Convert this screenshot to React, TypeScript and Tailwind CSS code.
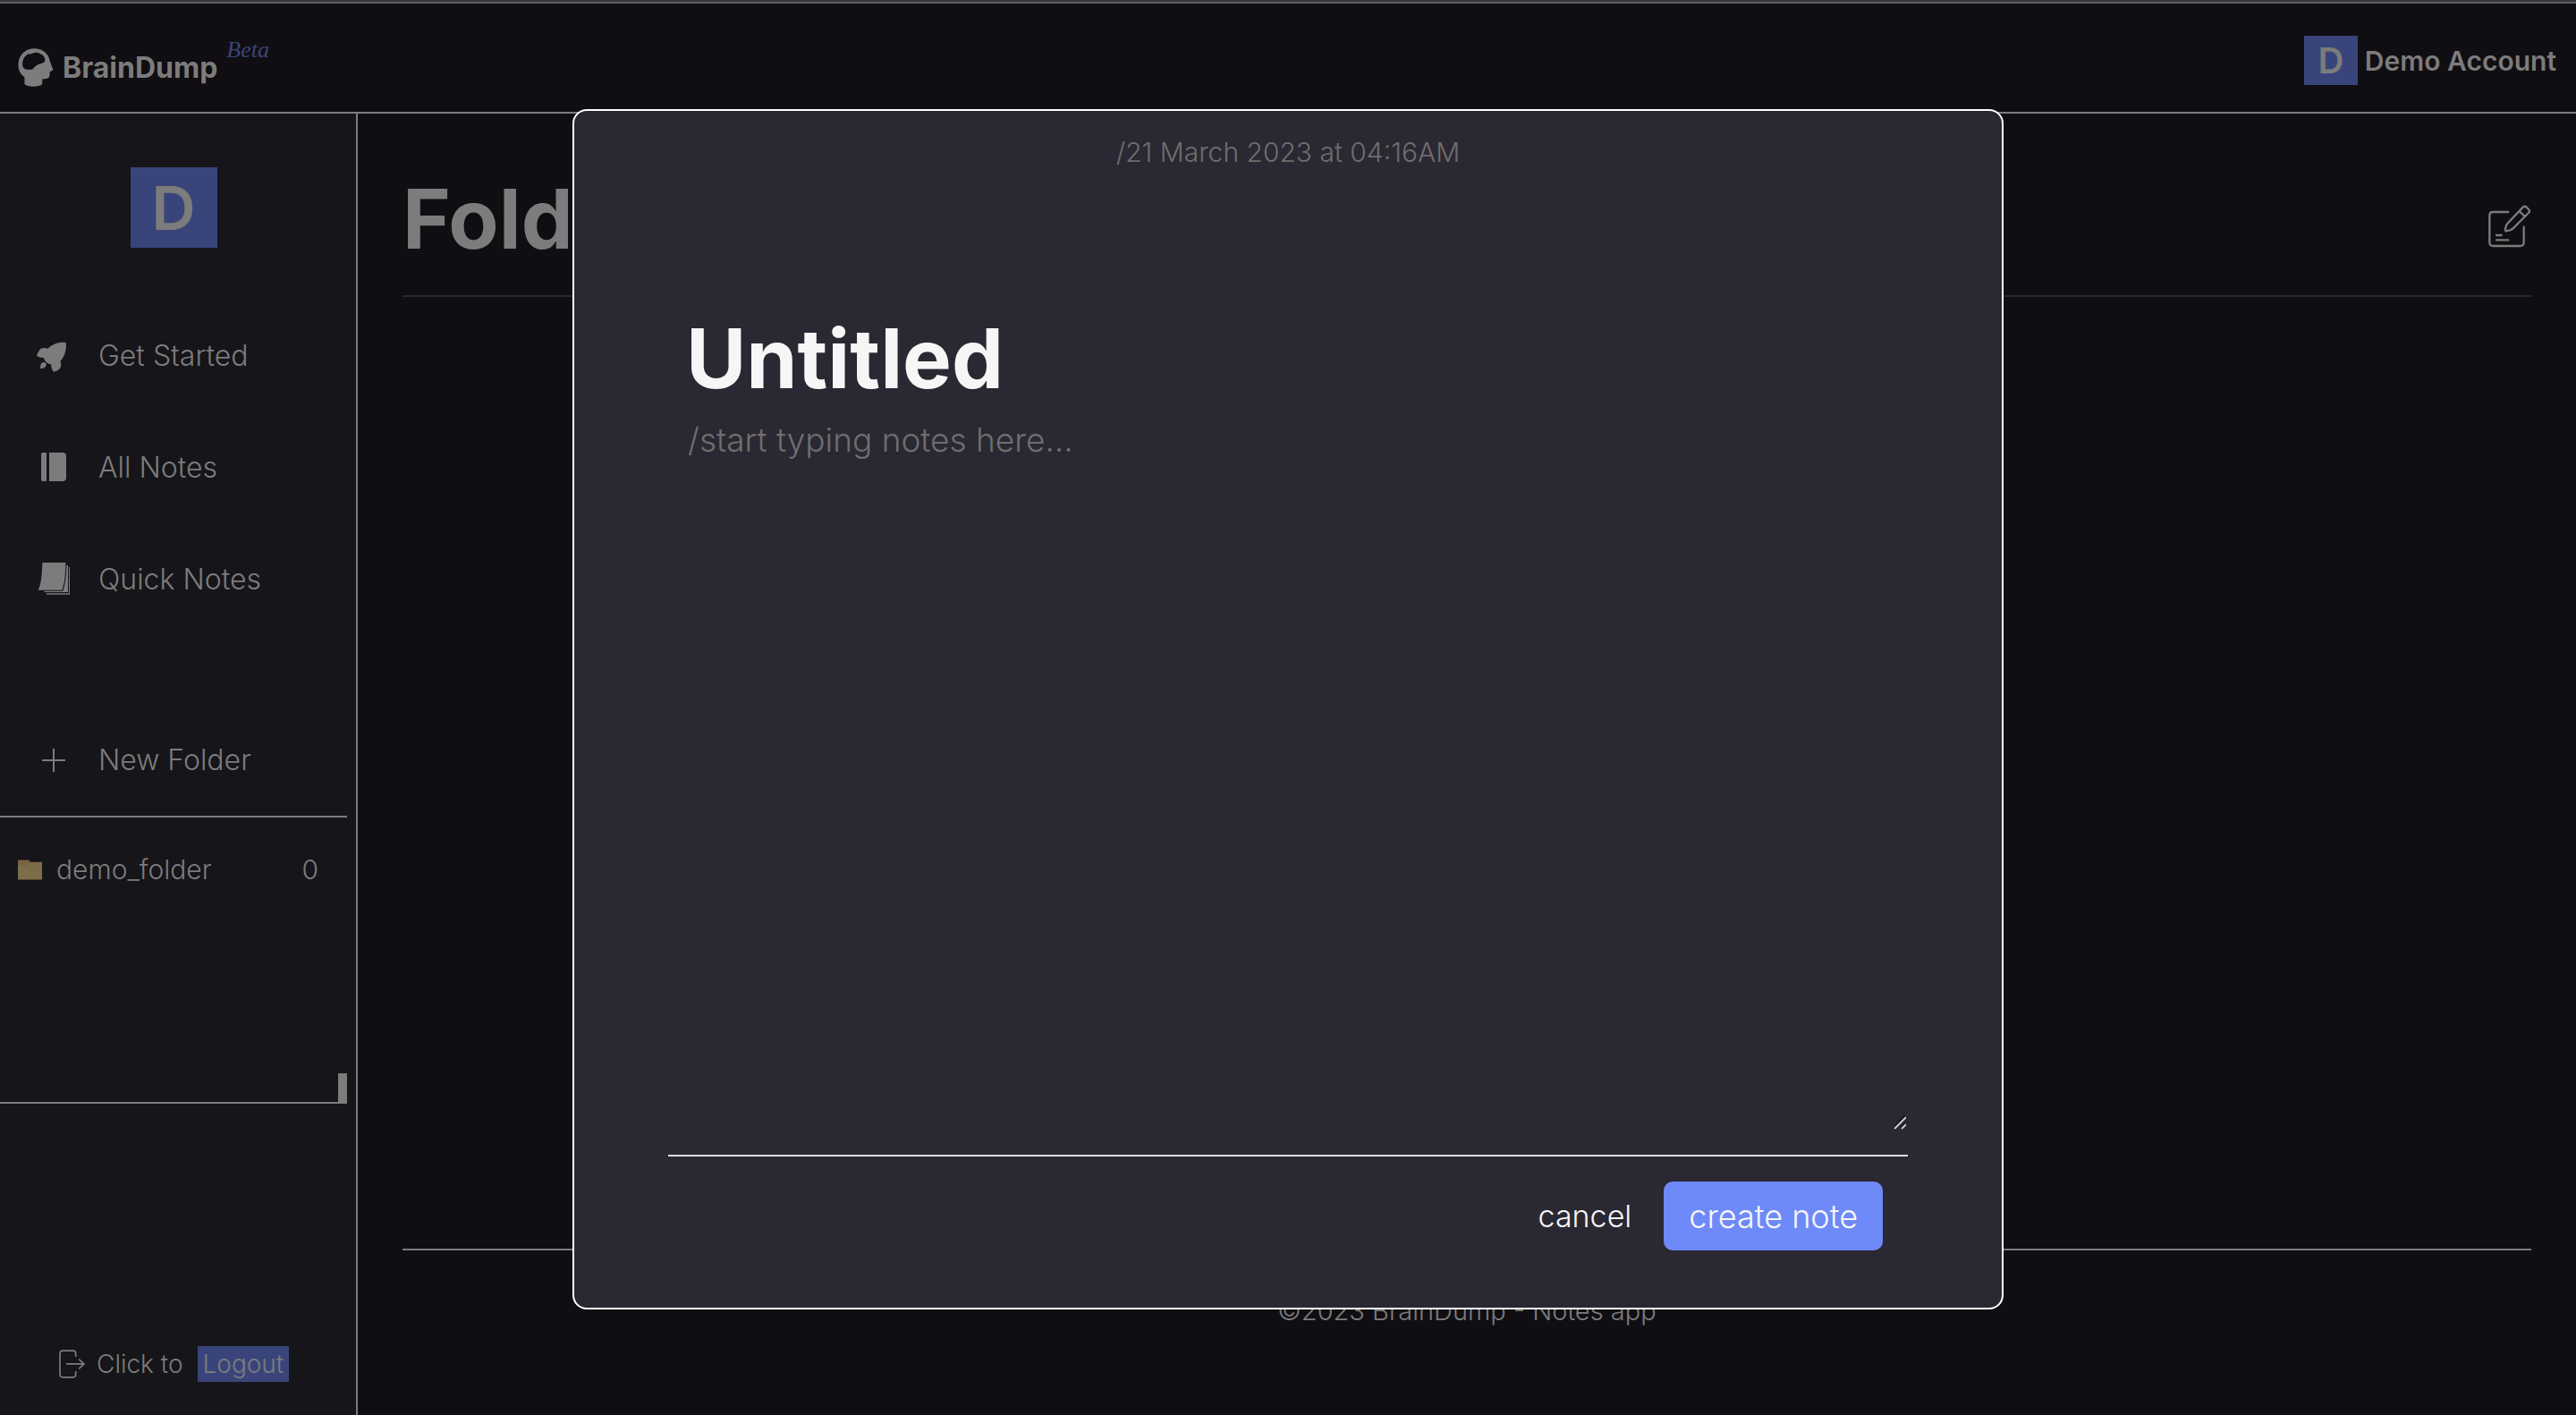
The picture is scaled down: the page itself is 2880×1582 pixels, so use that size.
import React from "react";

type IconProps = { className?: string };

function HeadIcon({ className }: IconProps) {
  return (
    <svg viewBox="62 162 120 130" className={className} fill="currentColor" fillRule="evenodd" aria-hidden="true">
      <path d="M63 217C63 184 88 163 117 163C145 163 166 180 170 206L180 233Q180 238 170 240L168 258Q165 266 144 266L144 283Q136 291 113 291Q92 291 84 283L84 259C70 250 63 236 63 217ZM77 217C77 200 84 187 98 181C106 184 109 178 116 178C122 174 136 177 138 182C147 184 154 193 153 204C151 211 143 212 134 215C123 219 117 226 112 232C105 236 98 233 91 234C82 231 77 226 77 217Z" />
    </svg>
  );
}

function RocketIcon({ className }: IconProps) {
  return (
    <svg viewBox="120 114 120 120" className={className} fill="currentColor" aria-hidden="true">
      <path d="M161 149C178 132 203 127 221 129C224 146 220 172 202 192C208 200 203 212 201 216C195 223 186 226 180 227C174 221 172 212 171 202C159 201 149 191 147 180C138 180 128 178 123 173C125 165 130 157 137 149C143 145 154 147 161 149Z" />
      <path d="M139 198Q147 191 154 199Q158 206 149 213Q142 217 135 215Q134 204 139 198Z" />
    </svg>
  );
}

function BookIcon({ className }: IconProps) {
  return (
    <svg viewBox="120 489 120 120" className={className} fill="currentColor" aria-hidden="true">
      <path d="M144 498H156V594H144Q138 594 138 588V504Q138 498 144 498Z" />
      <path d="M165 498H210Q222 498 222 510V582Q222 594 210 594H165Z" />
    </svg>
  );
}

function PagesIcon({ className }: IconProps) {
  return (
    <svg viewBox="120 864 120 120" className={className} fill="currentColor" aria-hidden="true">
      <path d="M142 867H220C220 905 216 940 208 959H128C138 940 141 905 142 867Z" />
      <path d="M223 876H228V966H148V962H211C218 945 222 915 223 876Z" />
      <path d="M231 882H234V974H156V970H231Z" />
    </svg>
  );
}

function PlusIcon({ className }: IconProps) {
  return (
    <svg viewBox="120 90 120 120" className={className} stroke="currentColor" strokeWidth="6" aria-hidden="true">
      <path d="M141 150H219M180 111V189" />
    </svg>
  );
}

function FolderIcon({ className }: IconProps) {
  return (
    <svg viewBox="0 0 81 68" className={className} aria-hidden="true">
      <path d="M0 1H36L42 8H81V20H0Z" fill="#7c6443" />
      <path d="M0 18H34L41 10H81V67H0Z" fill="#7c6d49" />
    </svg>
  );
}

function LogoutIcon({ className }: IconProps) {
  return (
    <svg viewBox="200 398 90 95" className={className} fill="none" stroke="currentColor" strokeWidth="5" strokeLinecap="round" strokeLinejoin="round" aria-hidden="true">
      <path d="M256 420V410Q256 401 247 401H212Q203 401 203 410V481Q203 490 212 490H247Q256 490 256 481V471M226 445H284M268 431L284 445L268 460" />
    </svg>
  );
}

function EditIcon({ className }: IconProps) {
  return (
    <svg viewBox="904 687 144 144" className={className} fill="none" stroke="currentColor" strokeWidth="7" strokeLinecap="round" strokeLinejoin="round" aria-hidden="true">
      <path d="M971 711H920Q908 711 908 723V813Q908 825 920 825H1011Q1023 825 1023 813V761M931 789H948M931 805H971" />
      <path d="M961 770Q962 756 968 750L1020 695Q1026 689 1032 695L1039 702Q1045 708 1039 714L987 766Q980 773 965 775Q961 775 961 770ZM1008 708L1026 726" />
    </svg>
  );
}

function GripIcon({ className }: IconProps) {
  return (
    <svg viewBox="0 0 14 16" className={className} fill="none" strokeWidth="2" aria-hidden="true">
      <path d="M0 14L13 0M8 14L13 9" stroke="#141318" />
      <path d="M1 15L14 2M9 15L14 10" stroke="#c9c8cd" />
    </svg>
  );
}

const links = [
  { label: "Get Started", Icon: RocketIcon },
  { label: "All Notes", Icon: BookIcon },
  { label: "Quick Notes", Icon: PagesIcon },
];

function Header() {
  return (
    <header className="flex h-[123px] items-center justify-between border-b-2 border-[#7c7c7c] pr-[22px] pl-5 font-semibold">
      <a href="#" className="mt-[22px] flex items-center gap-2.5">
        <HeadIcon className="h-[43px] w-10" />
        <span className="text-[32px] leading-10 font-bold">BrainDump</span>
        <sup className="-top-5 font-['Liberation_Serif',serif] text-[26px] leading-8 font-normal text-[#39457a] italic">Beta</sup>
      </a>
      <div className="mt-1.5 flex items-center gap-2">
        <span className="flex h-[55px] w-[60px] items-center justify-center bg-[#39457a] text-[40px]">D</span>
        <span className="text-[30px] leading-10">Demo Account</span>
      </div>
    </header>
  );
}

function Sidebar() {
  return (
    <aside className="flex w-[400px] shrink-0 flex-col border-r-2 border-[#7c7c7c] bg-[#161519] text-[32px] font-light">
      <div className="mt-[60px] mr-2.5 flex h-[90px] w-[97px] items-center justify-center self-center bg-[#39457a] text-[68px] font-semibold">D</div>
      <nav className="mt-[58px] flex flex-col">
        {links.map(({ label, Icon }) => (
          <a key={label} href="#" className="flex h-[125px] items-center gap-[30px] pl-10">
            <Icon className="size-10" />
            {label}
          </a>
        ))}
      </nav>
      <section className="mt-[77px] mr-2.5">
        <button className="flex h-[125px] w-full items-center gap-[30px] pl-10 text-left">
          <PlusIcon className="size-10" />
          New Folder
        </button>
        <div className="flex h-[322px] flex-col justify-between border-y-2 border-[#7c7c7c]">
          <a href="#" className="mt-9 flex items-center justify-between pr-8 pl-5 text-[30px] leading-11">
            <span className="flex items-center gap-4">
              <FolderIcon className="h-[23px] w-[27px]" />
              demo_folder
            </span>
            <span>0</span>
          </a>
          <span className="h-8 w-2.5 self-end bg-[#7c7c7c]" />
        </div>
      </section>
      <div className="mt-auto mb-9 flex items-center pl-[66px] text-[28px]">
        <LogoutIcon className="mr-3 h-8 w-[30px]" />
        Click to
        <button className="ml-4 h-10 bg-[#39457a] px-1.5 leading-10">Logout</button>
      </div>
    </aside>
  );
}

function NoteDialog() {
  return (
    <div className="fixed inset-0 flex items-start justify-center pt-[122px]">
      <form role="dialog" aria-label="New note" className="flex w-5/9 flex-col rounded-2xl border-2 border-white bg-[#2a2832] px-[105px] pb-16 text-[#f6f6f6]">
        <p className="mt-7 text-center text-[30px] leading-9 font-light text-[#6e6e6e]">/21 March 2023 at 04:16AM</p>
        <div className="relative mt-[156px] flex flex-col border-b-2 border-[#dcd9e6] pb-7">
          <input aria-label="Title" defaultValue="Untitled" className="h-[114px] w-full bg-transparent px-5 text-[92px] leading-[114px] font-bold outline-none" />
          <textarea
            aria-label="Note"
            placeholder="/start typing notes here..."
            className="h-[805px] w-full resize-none bg-transparent px-[22px] pt-3 text-[37px] leading-11 font-light outline-none placeholder:text-[#6e6e6e]"
          />
          <GripIcon className="pointer-events-none absolute right-0.5 bottom-7 h-4 w-3.5" />
        </div>
        <div className="mt-7 mr-7 flex items-center justify-end gap-9 font-light">
          <button type="button" className="text-[34px]">cancel</button>
          <button type="button" className="h-[77px] rounded-[10px] bg-[#6e8af8] px-7 text-[36px]">create note</button>
        </div>
      </form>
    </div>
  );
}

export default function App() {
  return (
    <div className="flex min-h-screen flex-col border-t-2 border-[#333538] bg-[#100e12] font-[Inter,sans-serif] text-[#7c7c7c]">
      <div className="h-0.5 bg-[#605e63]" />
      <Header />
      <div className="flex flex-1">
        <Sidebar />
        <main className="flex flex-1 flex-col px-[50px]">
          <div className="flex h-[205px] items-center justify-between border-b-2 border-[#2a282e]">
            <h1 className="mt-8 text-[92px] leading-[114px] font-bold">Folder</h1>
            <button aria-label="Edit" className="mt-12">
              <EditIcon className="size-12" />
            </button>
          </div>
          <footer className="mt-auto h-[186px] border-t-2 border-[#7c7c7c] pt-12 text-center text-[29px] leading-10 font-light">
            ©2023 BrainDump - Notes app
          </footer>
        </main>
      </div>
      <NoteDialog />
    </div>
  );
}
